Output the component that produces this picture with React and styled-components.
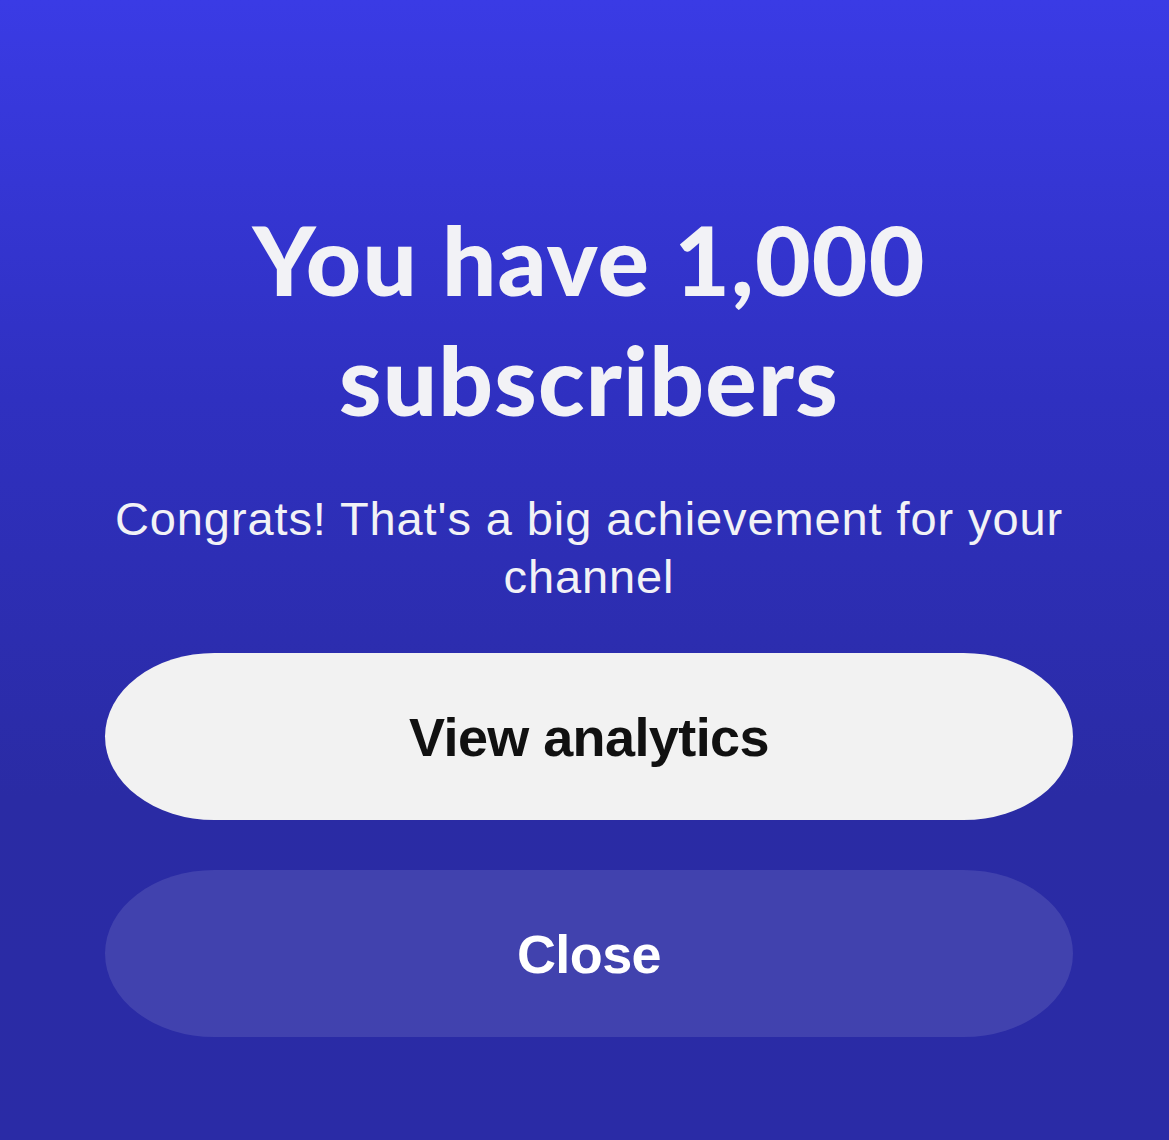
import React from "react";
import styled, { createGlobalStyle } from "styled-components";

const GlobalStyle = createGlobalStyle`
  html, body {
    margin: 0;
    padding: 0;
  }
  body {
    background: #2b2ba6;
  }
`;

const App = () => {
  return (
    <>
      <GlobalStyle />
      <Screen>
        <Title>
          You have 1,000
          <br />
          subscribers
        </Title>
        <Subtitle>
          Congrats! That's a big achievement for your
          <br />
          channel
        </Subtitle>
        <Actions>
          <PillButton primary>View analytics</PillButton>
          <PillButton>Close</PillButton>
        </Actions>
      </Screen>
    </>
  );
};

export default App;

const Screen = styled.div`
  width: 1169px;
  height: 1140px;
  box-sizing: border-box;
  padding: 199px 96px 0 105px;
  background: linear-gradient(180deg, #3a3be5 0%, #2f30c0 35%, #2a2ba4 70%, #2a2ba6 100%);
  display: flex;
  flex-direction: column;
  align-items: center;
  overflow: hidden;
`;

const Title = styled.h1`
  margin: 0;
  font-family: "Lato", "Noto Sans", sans-serif;
  font-weight: 900;
  font-size: 96px;
  line-height: 120px;
  letter-spacing: 1.2px;
  color: #f2f2f6;
  text-align: center;
`;

const Subtitle = styled.p`
  margin: 51px 0 0;
  font-family: "Liberation Sans", "Noto Sans", sans-serif;
  font-weight: 400;
  font-size: 47px;
  line-height: 58px;
  letter-spacing: 0.9px;
  color: #f2f2f6;
  text-align: center;
`;

const Actions = styled.div`
  width: 968px;
  margin-top: 47px;
  display: flex;
  flex-direction: column;
  gap: 50px;
`;

const PillButton = styled.button`
  width: 100%;
  height: 167px;
  border: none;
  border-radius: 110px / 84px;
  background: ${(p) => (p.primary ? "#f2f2f2" : "rgba(255, 255, 255, 0.11)")};
  color: ${(p) => (p.primary ? "#111111" : "#ffffff")};
  font-family: "Liberation Sans", "Noto Sans", sans-serif;
  font-weight: 700;
  font-size: 54px;
  letter-spacing: -0.6px;
  cursor: pointer;
`;
